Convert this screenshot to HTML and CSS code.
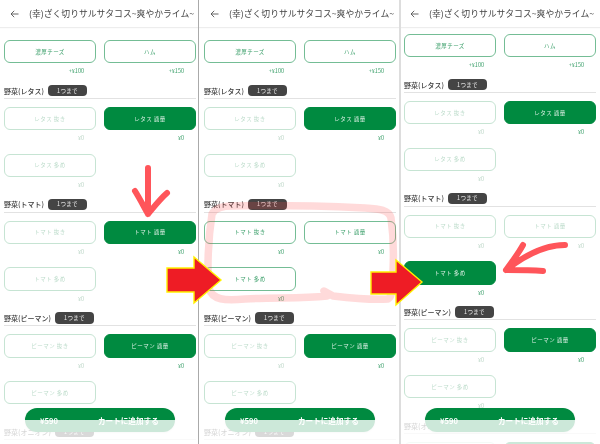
FILE: index.html
```html
<!DOCTYPE html>
<html lang="ja">
<head>
<meta charset="utf-8">
<title>カート</title>
<link rel="stylesheet" href="styles.css">
</head>
<body>
<main class="page">

<section class="panel panel-a">
  <header class="bar">
    <svg class="back" viewBox="0 0 9 8"><path d="M8.5 4H1M4.2 .8 1 4l3.2 3.2"/></svg>
    <h1 class="title">(幸)ざく切りサルサタコス~爽やかライム~</h1>
  </header>
  <div class="list">
    <div class="grid">
      <div class="opt"><div class="btn live">濃厚チーズ</div><div class="price">+¥100</div></div>
      <div class="opt"><div class="btn live">ハム</div><div class="price">+¥150</div></div>
    </div>
    <div class="head"><span class="name">野菜(レタス)</span><span class="chip">1つまで</span></div>
    <div class="grid">
      <div class="opt"><div class="btn idle">レタス 抜き</div><div class="price dim">¥0</div></div>
      <div class="opt"><div class="btn on">レタス 適量</div><div class="price">¥0</div></div>
      <div class="opt"><div class="btn idle">レタス 多め</div><div class="price dim">¥0</div></div>
    </div>
    <div class="head"><span class="name">野菜(トマト)</span><span class="chip">1つまで</span></div>
    <div class="grid">
      <div class="opt"><div class="btn idle">トマト 抜き</div><div class="price dim">¥0</div></div>
      <div class="opt"><div class="btn on">トマト 適量</div><div class="price">¥0</div></div>
      <div class="opt"><div class="btn idle">トマト 多め</div><div class="price dim">¥0</div></div>
    </div>
    <div class="head"><span class="name">野菜(ピーマン)</span><span class="chip">1つまで</span></div>
    <div class="grid">
      <div class="opt"><div class="btn idle">ピーマン 抜き</div><div class="price dim">¥0</div></div>
      <div class="opt"><div class="btn on">ピーマン 適量</div><div class="price">¥0</div></div>
      <div class="opt"><div class="btn idle">ピーマン 多め</div><div class="price dim">¥0</div></div>
    </div>
    <div class="head"><span class="name">野菜(オニオン)</span><span class="chip">1つまで</span></div>
  </div>
  <button class="cta"><span class="cta-price">¥590</span><span>カートに追加する</span></button>
  <div class="fade"></div>
</section>

<section class="panel panel-b">
  <header class="bar">
    <svg class="back" viewBox="0 0 9 8"><path d="M8.5 4H1M4.2 .8 1 4l3.2 3.2"/></svg>
    <h1 class="title">(幸)ざく切りサルサタコス~爽やかライム~</h1>
  </header>
  <div class="list">
    <div class="grid">
      <div class="opt"><div class="btn live">濃厚チーズ</div><div class="price">+¥100</div></div>
      <div class="opt"><div class="btn live">ハム</div><div class="price">+¥150</div></div>
    </div>
    <div class="head"><span class="name">野菜(レタス)</span><span class="chip">1つまで</span></div>
    <div class="grid">
      <div class="opt"><div class="btn idle">レタス 抜き</div><div class="price dim">¥0</div></div>
      <div class="opt"><div class="btn on">レタス 適量</div><div class="price">¥0</div></div>
      <div class="opt"><div class="btn idle">レタス 多め</div><div class="price dim">¥0</div></div>
    </div>
    <div class="head"><span class="name">野菜(トマト)</span><span class="chip">1つまで</span></div>
    <div class="grid">
      <div class="opt"><div class="btn live">トマト 抜き</div><div class="price">¥0</div></div>
      <div class="opt"><div class="btn live">トマト 適量</div><div class="price">¥0</div></div>
      <div class="opt"><div class="btn live">トマト 多め</div><div class="price">¥0</div></div>
    </div>
    <div class="head"><span class="name">野菜(ピーマン)</span><span class="chip">1つまで</span></div>
    <div class="grid">
      <div class="opt"><div class="btn idle">ピーマン 抜き</div><div class="price dim">¥0</div></div>
      <div class="opt"><div class="btn on">ピーマン 適量</div><div class="price">¥0</div></div>
      <div class="opt"><div class="btn idle">ピーマン 多め</div><div class="price dim">¥0</div></div>
    </div>
    <div class="head"><span class="name">野菜(オニオン)</span><span class="chip">1つまで</span></div>
  </div>
  <button class="cta"><span class="cta-price">¥590</span><span>カートに追加する</span></button>
  <div class="fade"></div>
</section>

<section class="panel panel-c">
  <header class="bar">
    <svg class="back" viewBox="0 0 9 8"><path d="M8.5 4H1M4.2 .8 1 4l3.2 3.2"/></svg>
    <h1 class="title">(幸)ざく切りサルサタコス~爽やかライム~</h1>
  </header>
  <div class="list">
    <div class="grid">
      <div class="opt"><div class="btn live">濃厚チーズ</div><div class="price">+¥100</div></div>
      <div class="opt"><div class="btn live">ハム</div><div class="price">+¥150</div></div>
    </div>
    <div class="head"><span class="name">野菜(レタス)</span><span class="chip">1つまで</span></div>
    <div class="grid">
      <div class="opt"><div class="btn idle">レタス 抜き</div><div class="price dim">¥0</div></div>
      <div class="opt"><div class="btn on">レタス 適量</div><div class="price">¥0</div></div>
      <div class="opt"><div class="btn idle">レタス 多め</div><div class="price dim">¥0</div></div>
    </div>
    <div class="head"><span class="name">野菜(トマト)</span><span class="chip">1つまで</span></div>
    <div class="grid">
      <div class="opt"><div class="btn idle">トマト 抜き</div><div class="price dim">¥0</div></div>
      <div class="opt"><div class="btn idle">トマト 適量</div><div class="price dim">¥0</div></div>
      <div class="opt"><div class="btn on">トマト 多め</div><div class="price">¥0</div></div>
    </div>
    <div class="head"><span class="name">野菜(ピーマン)</span><span class="chip">1つまで</span></div>
    <div class="grid">
      <div class="opt"><div class="btn idle">ピーマン 抜き</div><div class="price dim">¥0</div></div>
      <div class="opt"><div class="btn on">ピーマン 適量</div><div class="price">¥0</div></div>
      <div class="opt"><div class="btn idle">ピーマン 多め</div><div class="price dim">¥0</div></div>
    </div>
    <div class="head"><span class="name">野菜(オニオン)</span><span class="chip">1つまで</span></div>
    <div class="grid">
      <div class="opt"><div class="btn idle"></div></div>
      <div class="opt"><div class="btn on"></div></div>
    </div>
  </div>
  <button class="cta"><span class="cta-price">¥590</span><span>カートに追加する</span></button>
  <div class="fade"></div>
</section>

<svg class="marks" viewBox="0 0 600 444" aria-hidden="true">
  <path class="scribble" d="M212 214C208 240 207 270 209 288C212 300 225 301 245 299C275 297 300 299 327 296L324 291L333 296C350 298 375 300 388 299C393 296 393 285 393 270C394 250 393 232 391 218C389 210 380 209 365 208C320 206 270 205 232 206C222 206 215 208 212 214Z"/>
  <path class="pen" d="M148 168C148 185 148 200 148 214M135 191C140 199 144 207 148 214C154 207 160 199 167 193"/>
  <path class="pen" d="M565 245C545 245 525 255 506 270M523 245C518 254 512 262 506 270C518 270 530 270 543 271"/>
  <polygon class="bigarrow" points="167,268 194,268 194,257 221,280 194,303 194,292 167,292"/>
  <polygon class="bigarrow" points="371,272 396,272 396,260 422,282 396,305 396,294 371,294"/>
</svg>

</main>
</body>
</html>
```
FILE: styles.css
```css
* { box-sizing: border-box; }
html, body { margin: 0; background: #fff; }
body { font-family: "Noto Sans CJK JP", "Noto Sans", sans-serif; color: #333; }

.page {
  position: relative;
  display: flex;
  width: 600px;
  height: 444px;
  overflow: hidden;
  filter: blur(0.3px);
}

.panel {
  position: relative;
  flex: 0 0 200px;
  height: 444px;
  overflow: hidden;
  background: #fff;
}
.panel::after {
  content: "";
  position: absolute;
  top: 0;
  bottom: 0;
  width: 1px;
  background: #ddd;
}
.panel-a::after { right: 1px; background: #aaa; }
.panel-b::after { right: 0; }
.panel-c::after { left: 0; }

.bar {
  display: flex;
  align-items: center;
  height: 27px;
  padding: 0 0 0 10px;
  box-shadow: 0 1px 1px rgba(0, 0, 0, .07);
}
.back { width: 9px; height: 8px; flex: none; margin-right: 10px; }
.back path { fill: none; stroke: #555; stroke-width: .9; }
.title { margin: 0; font-size: 8.8px; font-weight: 400; color: #444; white-space: nowrap; }

.list { padding: 13px 4px 0; }
.panel-c .list { padding-top: 7px; }

.grid {
  display: grid;
  grid-template-columns: 92px 92px;
  column-gap: 8px;
  row-gap: 1.5px;
}
.opt { height: 45.2px; }

.btn {
  display: flex;
  align-items: center;
  justify-content: center;
  height: 23.4px;
  border: 1px solid;
  border-radius: 6px;
  font-size: 5.5px;
  letter-spacing: .5px;
  white-space: nowrap;
}
.live { border-color: #74bd95; color: #3fa16d; }
.idle { border-color: #c6e4d3; color: #bddccb; }
.on { border-color: #008a40; background: #008a40; color: #d8eee2; }

.price {
  margin-top: 4px;
  padding-right: 12px;
  font-size: 5.5px;
  line-height: 8px;
  text-align: right;
  color: #3b9f6a;
}
.dim { color: #bcd6c7; }

.head {
  display: flex;
  align-items: center;
  gap: 4px;
  height: 13.8px;
  padding-bottom: 2px;
  margin-bottom: 8px;
  border-bottom: 1px solid #e2e2e2;
}
.name { font-size: 7px; font-weight: 500; color: #3c3c3c; white-space: nowrap; }
.chip {
  display: flex;
  align-items: center;
  justify-content: center;
  width: 39px;
  height: 11.5px;
  border-radius: 4px;
  background: #444;
  color: #eee;
  font-size: 5.5px;
  letter-spacing: .3px;
}

.cta {
  position: absolute;
  left: 25px;
  top: 408px;
  display: flex;
  align-items: center;
  width: 150px;
  height: 24px;
  padding: 0 0 0 15px;
  border: 0;
  border-radius: 12px;
  background: #008a40;
  box-shadow: 0 1px 2px rgba(0, 0, 0, .12);
  color: #fff;
  font-family: inherit;
  font-size: 7.6px;
  font-weight: 700;
}
.cta-price { width: 58px; text-align: left; }

.fade {
  position: absolute;
  left: 0;
  right: 0;
  top: 420px;
  bottom: 0;
  background: rgba(255, 255, 255, .8);
}

.marks {
  position: absolute;
  left: 0;
  top: 0;
  width: 600px;
  height: 444px;
}
.scribble { fill: none; stroke: rgba(255, 70, 70, .2); stroke-width: 7.5; stroke-linejoin: round; }
.pen { fill: none; stroke: #ff555a; stroke-width: 6; stroke-linecap: round; stroke-linejoin: round; }
.bigarrow { fill: #ee1c25; stroke: #fff200; stroke-width: 1.4; }
```
